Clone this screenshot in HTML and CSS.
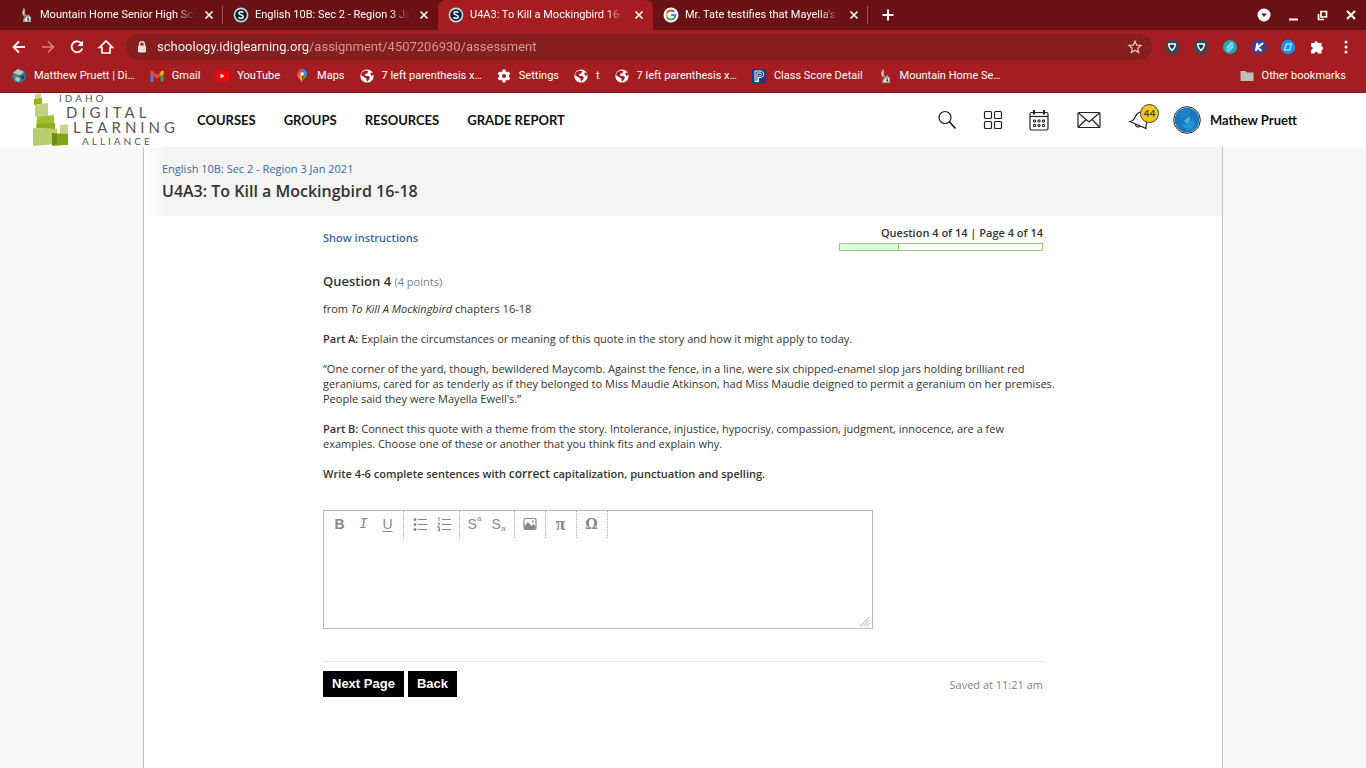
FILE: index.html
```html
<!DOCTYPE html>
<html lang="en">
<head>
  <meta charset="UTF-8">
  <meta name="viewport" content="width=device-width, initial-scale=1.0">
  <title>U4A3: To Kill a Mockingbird 16-18</title>
  <link rel="stylesheet" href="styles.css">
</head>
<body>
  <!-- shared icons -->
  <svg class="defs" aria-hidden="true">
    <symbol id="i-close" viewBox="0 0 16 16"><path d="M4.5 4.5l7 7M11.5 4.5l-7 7" stroke="#fff" stroke-width="1.6"/></symbol>
    <symbol id="i-s" viewBox="0 0 16 16"><circle cx="8" cy="8" r="7.4" fill="#b9dcec"/><circle cx="8" cy="8" r="5.8" fill="#10202c"/><path d="M10.3 5.7C9.4 4.5 6 4.400 5.900 6.300C5.900 8.300 10.300 7.500 10.300 9.700C10.200 11.800 6.500 11.600 5.500 10.300" fill="none" stroke="#fff" stroke-width="1.500"/></symbol>
    <symbol id="i-school" viewBox="0 0 16 16"><path d="M5 1l2 1 0 5 2 2 1-2 3 3v5H5l1-5-1-3z" fill="#a9a5a2"/><path d="M4 3l2 3-1 3zM7 10h2v4H7zM11 10h1v3h-1z" fill="#e8e4df"/><path d="M6 8l2 2-1 2zM9 12l2-1v3z" fill="#514c4b"/></symbol>
    <symbol id="i-globe" viewBox="0 0 16 16"><circle cx="8" cy="8" r="6.600" fill="#fff"/><path d="M3 4.500C4.500 2.500 8 2 9.500 3.500L8 5.500 6 6l.5 2h3l1.500 1.500-1 2-2 2.200-.7-3.200L4 8.500 1.900 7z" fill="#a51d20"/><path d="M11 5l2.500-.5.8 2.500-1.800 1z" fill="#a51d20"/></symbol>
    <symbol id="i-shield" viewBox="0 0 16 16"><circle cx="8" cy="8" r="7.200" fill="#2d4a5a"/><path d="M4.500 5h7c-.2 2.500-1.500 4.800-3.500 6.500C6 9.800 4.700 7.500 4.500 5z" fill="#21323f" stroke="#fff" stroke-width="1.500" stroke-linejoin="round"/></symbol>
  </svg>

  <div class="browser">
    <div class="tabs">
      <div class="tab">
        <svg class="ico"><use href="#i-school"/></svg>
        <span class="tab-name">Mountain Home Senior High School</span>
        <button class="tab-close" aria-label="Close tab"><svg class="ico"><use href="#i-close"/></svg></button>
      </div>
      <div class="tab no-line">
        <svg class="ico"><use href="#i-s"/></svg>
        <span class="tab-name">English 10B: Sec 2 - Region 3 Jan 2021</span>
        <button class="tab-close" aria-label="Close tab"><svg class="ico"><use href="#i-close"/></svg></button>
      </div>
      <div class="tab active">
        <svg class="ico"><use href="#i-s"/></svg>
        <span class="tab-name">U4A3: To Kill a Mockingbird 16-18</span>
        <button class="tab-close" aria-label="Close tab"><svg class="ico"><use href="#i-close"/></svg></button>
      </div>
      <div class="tab">
        <svg class="ico" viewBox="0 0 16 16"><circle cx="8" cy="8" r="7.500" fill="#fff"/><g fill="none" stroke-width="2"><path d="M11.300 4.800A4.600 4.600 0 0 0 4 5.700" stroke="#ea4335"/><path d="M4 5.700a4.600 4.600 0 0 0 0 4.600" stroke="#fbbc05"/><path d="M4 10.300a4.600 4.600 0 0 0 7 1.100" stroke="#34a853"/><path d="M11 11.400A4.600 4.600 0 0 0 12.500 8H8" stroke="#4285f4"/></g></svg>
        <span class="tab-name">Mr. Tate testifies that Mayella's right</span>
        <button class="tab-close" aria-label="Close tab"><svg class="ico"><use href="#i-close"/></svg></button>
      </div>
      <button class="tab-new" aria-label="New tab"><svg class="ico" viewBox="0 0 16 16"><path d="M8 2.500v11M2.500 8h11" stroke="#fff" stroke-width="2"/></svg></button>
      <div class="win-btns">
        <button aria-label="Search tabs"><svg class="ico" viewBox="0 0 16 16"><circle cx="8" cy="8" r="6.500" fill="#fff"/><path d="M5.300 6.500h5.400L8 10z" fill="#6a1113"/></svg></button>
        <button aria-label="Minimize"><svg class="ico" viewBox="0 0 16 16"><path d="M4 12.500h9" stroke="#fff" stroke-width="2"/></svg></button>
        <button aria-label="Restore"><svg class="ico" viewBox="0 0 16 16"><path d="M7 4.500h5.500v5.500H7zM4.500 7v5.500H10" fill="none" stroke="#fff" stroke-width="1.700"/></svg></button>
        <button aria-label="Close window"><svg class="ico" viewBox="0 0 16 16"><path d="M4 4l8 8M12 4l-8 8" stroke="#fff" stroke-width="2"/></svg></button>
      </div>
    </div>

    <div class="toolbar">
      <button aria-label="Back"><svg class="ico" viewBox="0 0 16 16"><path d="M14 8H3M8 2.500L2.500 8 8 13.500" fill="none" stroke="#fff" stroke-width="1.800"/></svg></button>
      <button aria-label="Forward"><svg class="ico" viewBox="0 0 16 16"><path d="M2 8h11M8 2.500L13.500 8 8 13.500" fill="none" stroke="#d98082" stroke-width="1.600"/></svg></button>
      <button aria-label="Reload"><svg class="ico" viewBox="0 0 16 16"><path d="M12.500 4.500A5.500 5.500 0 1 0 13.300 9.500" fill="none" stroke="#fff" stroke-width="1.800"/><path d="M14 1.500v5.500H8.500z" fill="#fff"/></svg></button>
      <button aria-label="Home"><svg class="ico" viewBox="0 0 16 16"><path d="M1.500 8.500L8 2l6.500 6.500H12v5.500H4V8.500z" fill="none" stroke="#fff" stroke-width="1.700"/></svg></button>
      <div class="omnibox">
        <svg class="ico" viewBox="0 0 16 16"><rect x="4" y="6.500" width="8" height="7" rx="1" fill="#f1d9d9"/><path d="M5.700 7V5a2.300 2.300 0 0 1 4.600 0v2" fill="none" stroke="#f1d9d9" stroke-width="1.500"/></svg>
        <input class="url" type="text" aria-label="Address" value="schoology.idiglearning.org/assignment/4507206930/assessment">
        <button aria-label="Bookmark this page"><svg class="ico" viewBox="0 0 16 16"><path d="M8 2.200l1.700 3.900 4.300.4-3.200 2.800.9 4.200L8 11.300l-3.700 2.200.9-4.200L2 6.500l4.300-.4z" fill="none" stroke="#f1c4c4" stroke-width="1.200"/></svg></button>
      </div>
      <div class="exts">
        <button aria-label="Extension"><svg class="ico"><use href="#i-shield"/></svg></button>
        <button aria-label="Extension"><svg class="ico"><use href="#i-shield"/></svg></button>
        <button aria-label="Extension"><svg class="ico" viewBox="0 0 16 16"><circle cx="8" cy="8" r="7" fill="#1fa9b5"/><path d="M4.500 7.500L9 3l2.500 1v4.500L7 13l-2.500-1z" fill="#7fd3ee"/><path d="M5 11l6-6" stroke="#4db8e4"/></svg></button>
        <button aria-label="Extension"><svg class="ico" viewBox="0 0 16 16"><circle cx="8" cy="8" r="7.200" fill="#3540a5"/><path d="M6.500 4L5 12M12 4L6.500 8.500l4 3.500" fill="none" stroke="#fff" stroke-width="2.200"/></svg></button>
        <button aria-label="Extension"><svg class="ico" viewBox="0 0 16 16"><circle cx="8" cy="8" r="7.200" fill="#1b8fe6"/><path d="M6.500 5h5l-2 6h-5z" fill="none" stroke="#8fe0ff" stroke-width="1.600" stroke-linejoin="round"/></svg></button>
        <button aria-label="Extensions"><svg class="ico" viewBox="0 0 16 16"><path d="M2 4h3.500a1.700 1.700 0 1 1 3.400 0h3.600v3.500a1.700 1.700 0 1 1 0 3.400V14.500H9a1.700 1.700 0 0 0-3.400 0H2V11a1.700 1.700 0 0 0 0-3.400z" fill="#fff"/></svg></button>
        <button aria-label="Menu"><svg class="ico" viewBox="0 0 16 16"><g fill="#fff"><circle cx="8" cy="3" r="1.500"/><circle cx="8" cy="8" r="1.500"/><circle cx="8" cy="13" r="1.500"/></g></svg></button>
      </div>
    </div>

    <div class="bookmarks">
      <a href="#"><svg class="ico" viewBox="0 0 16 16"><circle cx="8" cy="8" r="6.800" fill="#2f7f9d"/><path d="M2 5l5-4 6 3-4 3zM5 9l4 1-1 4-4-2z" fill="#bfc9c0"/><path d="M9 8l5-1-2 5z" fill="#1a3f5c"/><path d="M3 8l3-1 1 2-3 1z" fill="#5aa35a"/></svg>Matthew Pruett | Di…</a>
      <a href="#"><svg class="ico" viewBox="0 0 16 16"><path d="M1.500 3.500v10H4.500V6z" fill="#4285f4"/><path d="M14.500 3.500v10H11.500V6z" fill="#34a853"/><path d="M1.500 3L3 2.800 8 6.800l5-4 1.500.2v3L8 11 1.500 6z" fill="#ea4335"/><path d="M11.500 4l1.500-1.200 1.500.2v3l-3 2z" fill="#fbbc05"/></svg>Gmail</a>
      <a href="#"><svg class="ico" viewBox="0 0 16 16"><rect x="1" y="3" width="14" height="10" rx="2.500" fill="#f00"/><path d="M6.500 5.700v4.600L10.500 8z" fill="#fff"/></svg>YouTube</a>
      <a href="#"><svg class="ico" viewBox="0 0 16 16"><path d="M8 15C7.500 11.500 3 9.500 3 6L8 6z" fill="#fbbc04"/><path d="M8 15c.5-3.500 5-5.500 5-9L10 4z" fill="#34a853"/><path d="M3 6a5 5 0 0 1 5-5v6L4.500 9z" fill="#ea4335"/><path d="M8 1a5 5 0 0 1 5 5L8 8z" fill="#4285f4"/><circle cx="8" cy="6" r="1.800" fill="#fff"/></svg>Maps</a>
      <a href="#"><svg class="ico"><use href="#i-globe"/></svg>7 left parenthesis x…</a>
      <a href="#"><svg class="ico" viewBox="0 0 16 16"><circle cx="8" cy="8" r="3.500" fill="none" stroke="#fff" stroke-width="3"/><path d="M8 1.500v3M8 11.500v3M2.400 4.800L5 6.300M11 9.700l2.600 1.500M2.400 11.200L5 9.700M11 6.300l2.600-1.500" stroke="#fff" stroke-width="3"/></svg>Settings</a>
      <a href="#"><svg class="ico"><use href="#i-globe"/></svg>t</a>
      <a href="#"><svg class="ico"><use href="#i-globe"/></svg>7 left parenthesis x…</a>
      <a href="#"><svg class="ico" viewBox="0 0 16 16"><path d="M1 1h14v14H1z" fill="#16417f"/><path d="M4 13.500V3h5c5 0 5 6.500 0 6.500H7.500v4zM6 13V5h3c2 0 2 2.700 0 2.700H7.500" fill="none" stroke="#fff"/></svg>Class Score Detail</a>
      <a href="#"><svg class="ico"><use href="#i-school"/></svg>Mountain Home Se…</a>
      <a href="#" class="other"><svg class="ico" viewBox="0 0 16 16"><path d="M1.500 3h5l1.500 1.500h6.500V13h-13z" fill="#bdbdbd"/></svg>Other bookmarks</a>
    </div>
  </div>

  <header class="header">
    <a href="#" class="logo" aria-label="Idaho Digital Learning Alliance">
      <svg width="146" height="54" viewBox="0 0 146 54">
        <path d="M2 1l6-1v6l-6 1z" fill="#cdd68f"/>
        <path d="M1 6l8-1v6l-8 1z" fill="#96b32a"/>
        <path d="M2 12l13-2v14H2z" fill="#c3d07f"/>
        <path d="M0 35l24 1v15L0 53z" fill="#b9cd6b"/>
        <path d="M4 24l17-2v13H3z" fill="#a1c02e"/>
        <path d="M4 31l18-1v6l-18-1z" fill="#8dad1c"/>
        <path d="M27 32l8-1v11h-8z" fill="#c8d58a"/>
        <path d="M19 40l16 1v11l-16 1z" fill="#83a51b"/>
        <path d="M19 40l5 1v10l-5 1z" fill="#6c8d12"/>
        <g class="logo-text">
          <text class="logo-sm" x="26" y="9">IDAHO</text>
          <text x="33" y="25">DIGITAL</text>
          <text x="40" y="40">LEARNING</text>
          <text class="logo-sm" x="49" y="52">ALLIANCE</text>
        </g>
      </svg>
    </a>
    <nav class="nav">
      <a href="#">COURSES</a>
      <a href="#">GROUPS</a>
      <a href="#">RESOURCES</a>
      <a href="#">GRADE REPORT</a>
    </nav>
    <div class="user-nav">
      <button aria-label="Search"><svg width="24" height="24" viewBox="0 0 24 24"><circle cx="10" cy="9.500" r="6" /><path d="M14.500 14l6 6.500" stroke-width="1.800"/></svg></button>
      <button aria-label="Apps"><svg width="24" height="24" viewBox="0 0 24 24"><rect x="3.500" y="3.500" width="7" height="7" rx="1"/><rect x="13.500" y="3.500" width="7" height="7" rx="1"/><rect x="3.500" y="13.500" width="7" height="7" rx="1"/><rect x="13.500" y="13.500" width="7" height="7" rx="1"/></svg></button>
      <button aria-label="Calendar"><svg width="24" height="24" viewBox="0 0 24 24"><rect x="3" y="4.500" width="18" height="17.500" rx="1.500"/><path d="M3 8.500h18"/><path d="M7 2v4.500M17 2v4.500" stroke-width="2"/><path d="M6.500 12h2v2h-2zM11 12h2v2h-2zM15.500 12h2v2h-2zM6.500 16.500h2v2h-2zM11 16.500h2v2h-2zM15.500 16.500h2v2h-2z" stroke-width="1"/></svg></button>
      <button class="wide" aria-label="Messages"><svg width="24" height="24" viewBox="0 0 24 24"><rect x="1" y="4.500" width="22" height="15" rx="1"/><path d="M1.500 5L12 14 22.500 5M1.500 19L9 11.500M22.500 19L15 11.500"/></svg></button>
      <button class="bell" aria-label="Notifications"><svg width="24" height="24" viewBox="0 0 24 24"><path d="M3 13.500L19 20.500C18.500 17 20 15 20.500 11.500 21 8 19 5 16 4.500 12.500 3.500 10 5.500 8.500 8.500 7 12 6 13 3 13.500z"/><path d="M8.500 16c-.5 2.500 3 4 4.500 2"/></svg><span class="badge">44</span></button>
      <a href="#" class="user">
        <svg width="28" height="28" viewBox="0 0 28 28"><circle cx="14" cy="14" r="13.300" fill="#fff" stroke="#222" stroke-width="1"/><circle cx="14" cy="14" r="12.300" fill="#1a78bd" stroke="none"/><path d="M6 7c4-4 9-4 12-2-2 3-4 5-8 7-3 1-5-1-4-5z" fill="#1f82c6" stroke="none"/><path d="M9 18c5 2 9-2 10-6 3 4 3 8 0 11-4 2-8 0-10-5z" fill="#2a93d3" stroke="none"/><path d="M16 10c2 3 1 6-2 8l-3-3z" fill="#4fabe0" stroke="none"/></svg>
        Mathew Pruett
      </a>
    </div>
  </header>

  <main class="page">
    <div class="page-title">
      <a href="#">English 10B: Sec 2 - Region 3 Jan 2021</a>
      <h1>U4A3: To Kill a Mockingbird 16-18</h1>
    </div>

    <div class="content">
      <div class="status">
        <a href="#">Show instructions</a>
        <div class="progress-wrap">
          <span>Question 4 of 14 | Page 4 of 14</span>
          <div class="progress"><div class="progress-bar" style="width: 29%"></div></div>
        </div>
      </div>

      <div class="question">
        <h2>Question 4 <span>(4 points)</span></h2>
        <p>from <em>To Kill A Mockingbird</em> chapters 16-18</p>
        <p><strong>Part A:</strong> Explain the circumstances or meaning of this quote in the story and how it might apply to today.</p>
        <p>“One corner of the yard, though, bewildered Maycomb. Against the fence, in a line, were six chipped-enamel slop jars holding brilliant red geraniums, cared for as tenderly as if they belonged to Miss Maudie Atkinson, had Miss Maudie deigned to permit a geranium on her premises. People said they were Mayella Ewell's.”</p>
        <p><strong>Part B:</strong> Connect this quote with a theme from the story. Intolerance, injustice, hypocrisy, compassion, judgment, innocence, are a few examples. Choose one of these or another that you think fits and explain why.</p>
        <p><strong>Write 4-6 complete sentences with <span class="big">correct</span> capitalization, punctuation and spelling.</strong></p>
      </div>

      <form onsubmit="return false">
        <div class="editor">
          <div class="editor-bar">
            <div class="group first">
              <button type="button" class="b" aria-label="Bold">B</button>
              <button type="button" class="i" aria-label="Italic">I</button>
              <button type="button" class="u" aria-label="Underline">U</button>
            </div>
            <div class="group first">
              <button type="button" aria-label="Bullet list"><svg class="ico" viewBox="0 0 16 16"><path d="M6 3.500h9M6 8.500h9M6 13.500h9" stroke="#888"/><g fill="#888"><circle cx="3" cy="3.500" r="1.500"/><circle cx="3" cy="8.500" r="1.500"/><circle cx="3" cy="13.500" r="1.500"/></g></svg></button>
              <button type="button" aria-label="Numbered list"><svg class="ico" viewBox="0 0 16 16"><path d="M6 3.500h9M6 8.500h9M6 13.500h9" stroke="#888"/><path d="M2 2l1-.5V5M1.500 7h2v1.500l-2 1.500h2M1.500 11.500h2v3.500h-2M2 13.200h1.500" fill="none" stroke="#888"/></svg></button>
            </div>
            <div class="group">
              <button type="button" aria-label="Superscript">S<sup>a</sup></button>
              <button type="button" aria-label="Subscript">S<sub>a</sub></button>
            </div>
            <div class="group">
              <button type="button" aria-label="Image"><svg class="ico" viewBox="0 0 16 16"><rect x="2" y="2.500" width="12" height="11" rx="1.500" fill="none" stroke="#888" stroke-width="1.200"/><path d="M2.500 13V10L6 6l3.500 4L11.500 8l2 2.500V13z" fill="#888"/><circle cx="11" cy="5.500" r="1" fill="#888"/></svg></button>
            </div>
            <div class="group">
              <button type="button" class="sym pi" aria-label="Equation">π</button>
            </div>
            <div class="group">
              <button type="button" class="sym" aria-label="Symbol">Ω</button>
            </div>
          </div>
          <textarea aria-label="Answer"></textarea>
          <svg class="grip" width="11" height="11" viewBox="0 0 11 11"><path d="M1 10.500L10.500 1M4 10.500L10.500 4M7 10.500L10.500 7" stroke="#aaa"/></svg>
        </div>

        <div class="actions">
          <button type="submit">Next Page</button>
          <button type="button">Back</button>
          <span class="saved">Saved at 11:21 am</span>
        </div>
      </form>
    </div>
  </main>
</body>
</html>
```

FILE: styles.css
```css
* {
  box-sizing: border-box;
  margin: 0;
  padding: 0;
}

body {
  min-height: 100vh;
  display: flex;
  flex-direction: column;
  background: #f9f8f7;
  color: #333;
  font: 11px/15px "Open Sans", sans-serif;
}

a {
  color: #3b66a5;
  text-decoration: none;
}

button {
  border: 0;
  background: none;
  font: inherit;
  color: inherit;
  cursor: pointer;
}

.defs {
  display: none;
}

.ico {
  display: block;
  flex: none;
  width: 16px;
  height: 16px;
}

/* browser window */
.browser {
  background: #a51d20;
  border-bottom: 1px solid #7a1517;
  color: #fff;
  font: 11px/16px Roboto, sans-serif;
}

.tabs {
  display: flex;
  align-items: center;
  height: 30px;
  padding-left: 8px;
  background: #6a1113;
}

.tab {
  display: flex;
  align-items: center;
  gap: 6px;
  width: 215px;
  height: 30px;
  padding: 0 6px 1px 10px;
  background: linear-gradient(#9c5254, #9c5254) right 6px / 1px 18px no-repeat;
}

.tab.no-line {
  background: none;
}

.tab.active {
  background: #a51d20;
  border-radius: 8px 8px 0 0;
}

.tab-name {
  flex: 1;
  overflow: hidden;
  white-space: nowrap;
  -webkit-mask-image: linear-gradient(to left, transparent, #000 20px);
  mask-image: linear-gradient(to left, transparent, #000 20px);
}

.tab-new {
  margin-left: 12px;
  padding-bottom: 1px;
}

.win-btns {
  display: flex;
  gap: 13px;
  margin-left: auto;
  padding-right: 7px;
}

.toolbar {
  display: flex;
  align-items: center;
  gap: 13px;
  height: 33px;
  padding: 0 12px 0 11px;
}

.omnibox {
  flex: 1;
  display: flex;
  align-items: center;
  gap: 7px;
  height: 26px;
  margin-left: -1px;
  padding: 0 9px 0 8px;
  border-radius: 13px;
  background: #851e1f;
}

.url {
  flex: 1;
  border: 0;
  outline: 0;
  font: 13px/18px Roboto, sans-serif;
  color: transparent;
  /* domain is brighter than the path */
  background: linear-gradient(to right, #fff 152px, #d99a9a 152px);
  -webkit-background-clip: text;
  background-clip: text;
}

.exts {
  display: flex;
  gap: 13px;
  margin-left: -1px;
}

.bookmarks {
  display: flex;
  align-items: center;
  gap: 14px;
  height: 29px;
  padding: 0 20px 4px 11px;
}

.bookmarks a {
  display: flex;
  align-items: center;
  gap: 7px;
  color: #fff;
  white-space: nowrap;
}

.bookmarks .other {
  margin-left: auto;
}

/* site header */
.header {
  display: flex;
  align-items: center;
  height: 54px;
  padding: 0 69px 0 33px;
  background: #fff;
  color: #111;
  font: bold 13px/20px Lato, sans-serif;
}

.header a {
  color: #111;
}

.logo svg {
  display: block;
}

.logo-text {
  font: 15px Lato, sans-serif;
  letter-spacing: 4px;
  fill: #58585a;
}

.logo-text .logo-sm {
  font-size: 10px;
  letter-spacing: 3px;
}

.nav {
  display: flex;
  gap: 28px;
  margin-left: 18px;
}

.user-nav {
  display: flex;
  align-items: center;
  gap: 22px;
  margin-left: auto;
}

.user-nav svg {
  display: block;
  fill: none;
  stroke: #222;
  stroke-width: 1.2;
}

.user-nav .wide {
  padding: 0 4px;
}

.bell {
  position: relative;
}

.badge {
  position: absolute;
  top: -4px;
  right: -8px;
  width: 19px;
  height: 19px;
  border: 1px solid #444;
  border-radius: 50%;
  background: #f5c800;
  color: #444;
  font-size: 10px;
  line-height: 17px;
}

.user {
  display: flex;
  align-items: center;
  gap: 9px;
}

/* page */
.page {
  flex: 1;
  width: 100%;
  max-width: 1080px;
  margin: 0 auto;
  background: #fff;
  border: solid #c6c6c6;
  border-width: 0 1px;
}

.page-title {
  padding: 14px 18px;
  background: linear-gradient(to right, #fff, #f4f4f4 24px);
}

.page-title h1 {
  margin-top: 4px;
  font-size: 16px;
  font-weight: 600;
  line-height: 22px;
}

.content {
  max-width: 720px;
  margin: 0 auto;
}

.status {
  display: flex;
  justify-content: space-between;
  padding-top: 9px;
}

.status a {
  padding-top: 5px;
  font-weight: 600;
}

.progress-wrap {
  width: 204px;
  font-weight: 600;
  text-align: right;
}

.progress {
  height: 8px;
  margin-top: 3px;
  border: 1px solid #9c7;
}

.progress-bar {
  height: 100%;
  background: #dfd;
  border-right: 1px solid #9c7;
}

/* lines run slightly past the column edge */
.question {
  margin-right: -14px;
  padding-top: 21px;
}

.question h2 {
  margin-bottom: 10px;
  font-size: 13px;
  font-weight: 600;
  line-height: 18px;
}

.question h2 span {
  color: #777f8c;
  font-size: 11px;
  font-weight: 400;
}

.question p {
  margin-bottom: 15px;
}

.question strong {
  font-weight: 600;
}

.question .big {
  font-size: 12px;
}

.editor {
  position: relative;
  width: 550px;
  margin-top: 29px;
  border: 1px solid #bbb;
}

.editor-bar {
  display: flex;
  height: 27px;
}

.group {
  display: flex;
  align-items: center;
  gap: 1px;
  padding: 0 4px 1px 3px;
  border-right: 1px dotted #aaa;
}

.group.first {
  padding-left: 4px;
}

.group button {
  display: flex;
  justify-content: center;
  width: 23px;
  color: #888;
  font: 14px/18px "Liberation Sans", sans-serif;
}

.group .b {
  font-weight: bold;
}

.group .i {
  font-family: "Liberation Mono", monospace;
  font-style: italic;
}

.group .u {
  text-decoration: underline;
  text-underline-offset: 2px;
}

.group .sym {
  font-family: "DejaVu Serif", serif;
  font-weight: bold;
}

.group .pi {
  font-family: "Liberation Serif", serif;
  font-size: 18px;
}

.group sup,
.group sub {
  font-size: 8px;
  line-height: 8px;
}

.group sub {
  align-self: flex-end;
}

.editor textarea {
  display: block;
  width: 100%;
  height: 90px;
  padding: 4px 8px;
  border: 0;
  outline: 0;
  resize: none;
  font: inherit;
}

.grip {
  position: absolute;
  right: 2px;
  bottom: 1px;
}

.actions {
  display: flex;
  gap: 4px;
  margin-top: 32px;
  padding-top: 9px;
  border-top: 1px solid #e6e6e6;
}

.actions button {
  height: 26px;
  padding: 0 9px;
  background: #000;
  color: #fff;
  font: bold 13px/26px "Liberation Sans", sans-serif;
}

.saved {
  margin-left: auto;
  padding-top: 6px;
  color: #7d848f;
}
```
